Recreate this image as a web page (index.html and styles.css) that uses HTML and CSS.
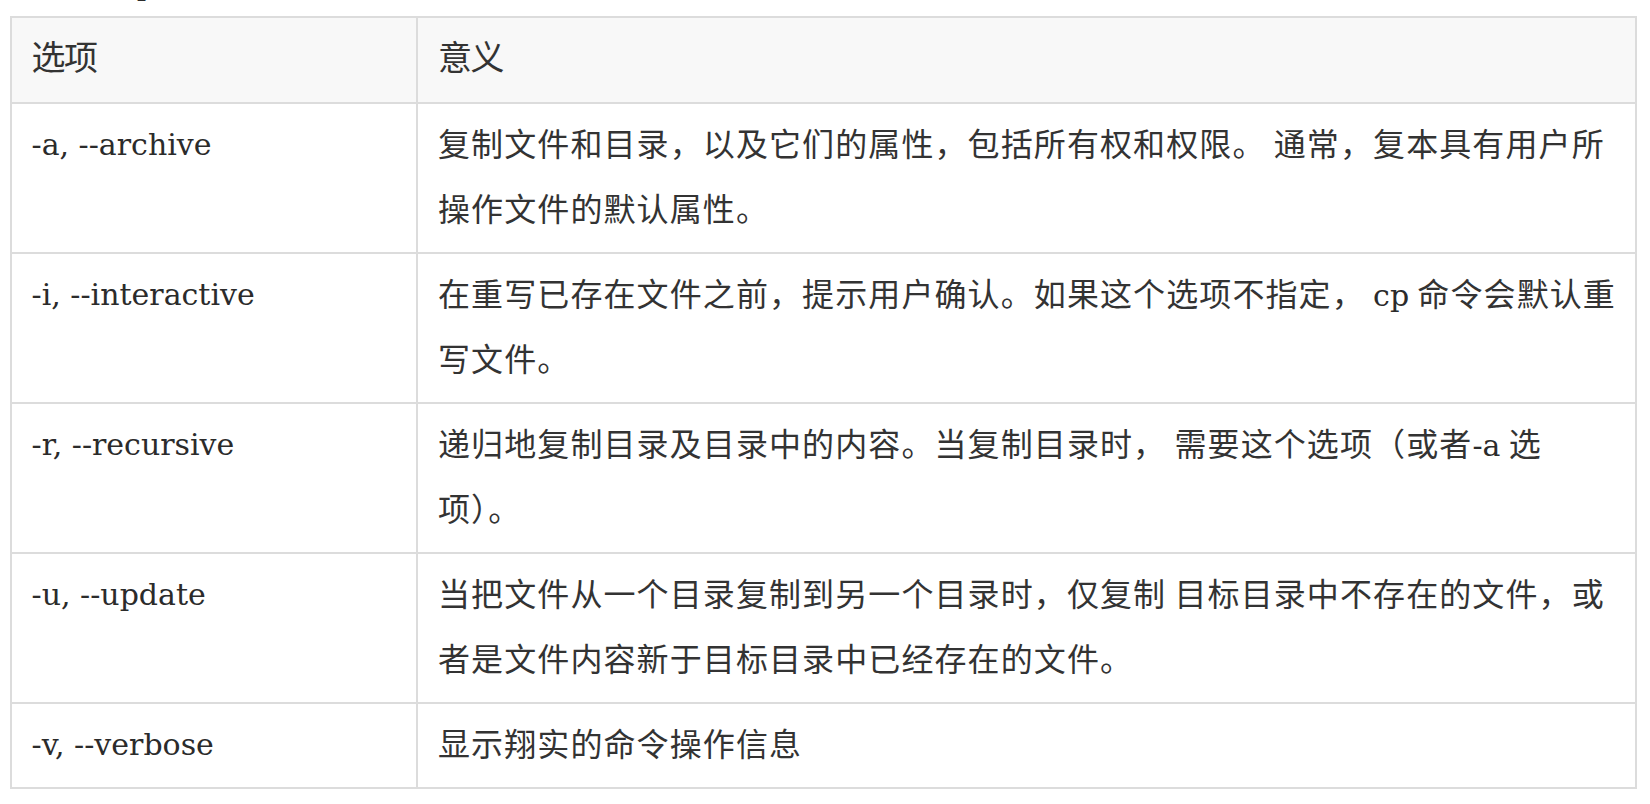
FILE: index.html
```html
<!DOCTYPE html>
<html lang="zh-CN">
<head>
<meta charset="utf-8">
<title>cp 选项</title>
<link rel="stylesheet" href="styles.css">
</head>
<body>
<div class="page">
  <p class="prev"><span class="lat">cp</span></p>
  <table class="opts">
    <colgroup><col class="c1"><col class="c2"></colgroup>
    <thead>
      <tr><th>选项</th><th>意义</th></tr>
    </thead>
    <tbody>
      <tr>
        <td class="opt">-a, --archive</td>
        <td class="desc">复制文件和目录，以及它们的属性，包括所有权和权限。 通常，复本具有用户所<br>操作文件的默认属性。</td>
      </tr>
      <tr>
        <td class="opt">-i, --interactive</td>
        <td class="desc">在重写已存在文件之前，提示用户确认。如果这个选项不指定， <span class="lat">cp</span> 命令会默认重<br>写文件。</td>
      </tr>
      <tr>
        <td class="opt">-r, --recursive</td>
        <td class="desc">递归地复制目录及目录中的内容。当复制目录时， 需要这个选项（或者<span class="lat">-a</span> 选<br>项）。</td>
      </tr>
      <tr>
        <td class="opt">-u, --update</td>
        <td class="desc">当把文件从一个目录复制到另一个目录时，仅复制 目标目录中不存在的文件，或<br>者是文件内容新于目标目录中已经存在的文件。</td>
      </tr>
      <tr>
        <td class="opt">-v, --verbose</td>
        <td class="desc">显示翔实的命令操作信息</td>
      </tr>
    </tbody>
  </table>
</div>
</body>
</html>
```
FILE: styles.css
```css
html, body {
  margin: 0;
  padding: 0;
  background: #ffffff;
}

.page {
  padding: 0 0 0 10px;
  color: #333333;
  font-family: "Noto Sans CJK SC", "Noto Sans", sans-serif;
}

.prev {
  margin: 0;
  height: 16px;
  overflow: hidden;
  padding-left: 110px;
}

.prev .lat {
  display: block;
  margin-top: -30px;
  line-height: 30px;
}

.lat {
  font-family: "DejaVu Serif", "Liberation Serif", serif;
  font-size: 30px;
  color: #2b2b2b;
}

.opts {
  border-collapse: collapse;
  table-layout: fixed;
  width: 1627px;
}

.c1 {
  width: 406px;
}

.opts th,
.opts td {
  border: 2px solid #dcdcdc;
  vertical-align: top;
  text-align: left;
  white-space: nowrap;
  line-height: 64.4px;
}

.opts th {
  background: #f8f8f8;
  font-weight: normal;
  font-size: 34px;
  letter-spacing: -1.6px;
  padding: 5.6px 20px 13.6px 20px;
}

.opts th:first-child {
  padding-left: 19.5px;
}

.opts td.opt {
  font-family: "DejaVu Serif", "Liberation Serif", serif;
  font-size: 30px;
  color: #2b2b2b;
  padding: 9.6px 20px 9.6px 19.5px;
}

.opts td.desc {
  font-size: 32px;
  letter-spacing: 1.1px;
  padding: 6.8px 20px 12.4px 20px;
}

.opts td.desc .lat {
  letter-spacing: 0;
  line-height: 1;
}
```
